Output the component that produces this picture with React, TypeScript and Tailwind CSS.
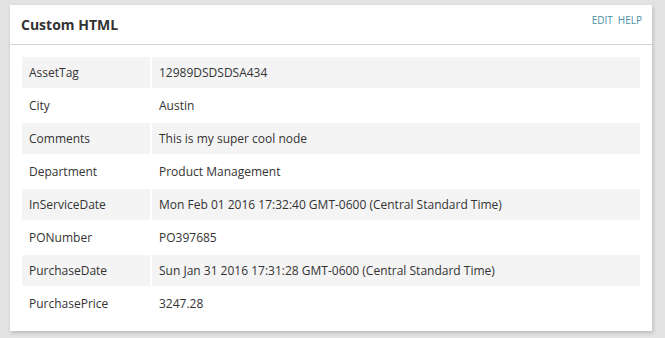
export default function App() {
  const rows: [string, string][] = [
    ["AssetTag", "12989DSDSDSA434"],
    ["City", "Austin"],
    ["Comments", "This is my super cool node"],
    ["Department", "Product Management"],
    ["InServiceDate", "Mon Feb 01 2016 17:32:40 GMT-0600 (Central Standard Time)"],
    ["PONumber", "PO397685"],
    ["PurchaseDate", "Sun Jan 31 2016 17:31:28 GMT-0600 (Central Standard Time)"],
    ["PurchasePrice", "3247.28"],
  ];
  return (
    <div
      className="w-[665px] h-[338px] bg-[#e3e3e3] pt-[5px] pl-[10px]"
      style={{ fontFamily: '"Open Sans", sans-serif' }}
    >
      <div className="w-[642px] h-[326px] bg-white shadow-[1px_2px_4px_rgba(0,0,0,0.18)]">
        <div className="h-[39px] border-b border-[#d4d4d4] flex items-center justify-between pl-[11px] pr-[10px] box-content">
          <span className="text-[14px] font-bold text-[#333]">Custom HTML</span>
          <div className="flex gap-[5px] text-[10px] text-[#4a8fa6] -mt-[8px]">
            <span>EDIT</span>
            <span>HELP</span>
          </div>
        </div>
        <div className="px-[10px] pt-[10px]">
          <table className="w-full border-separate border-spacing-[2px] text-[12px] text-[#333]">
            <tbody>
              {rows.map(([k, v], i) => (
                <tr key={k} className={i % 2 === 0 ? "bg-[#f4f4f4]" : ""}>
                  <td className="w-[128px] h-[31px] pl-[7px] align-middle">{k}</td>
                  <td className="h-[31px] pl-[7px] align-middle">{v}</td>
                </tr>
              ))}
            </tbody>
          </table>
        </div>
      </div>
    </div>
  );
}
